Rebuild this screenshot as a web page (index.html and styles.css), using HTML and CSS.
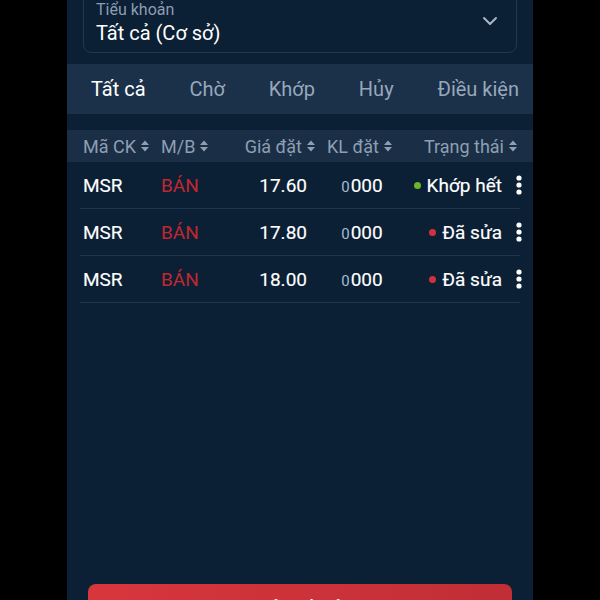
FILE: index.html
```html
<!DOCTYPE html>
<html lang="vi">
<head>
    <meta charset="UTF-8">
    <meta name="viewport" content="width=device-width, initial-scale=1.0">
    <title>Sổ lệnh</title>
    <link rel="stylesheet" href="styles.css">
</head>
<body>

<main class="panel">
    <!-- Chọn tiểu khoản -->
    <div class="account-select">
        <div class="account-text">
            <span class="account-label">Tiểu khoản</span>
            <span class="account-value">Tất cả (Cơ sở)</span>
        </div>
        <svg class="chevron" width="16" height="10" viewBox="0 0 16 10">
            <path d="M2 2 L8 8 L14 2" fill="none" stroke="currentColor" stroke-width="2" stroke-linecap="round" stroke-linejoin="round"/>
        </svg>
    </div>

    <!-- Tabs -->
    <nav class="tabs">
        <span class="tab active">Tất cả</span>
        <span class="tab">Chờ</span>
        <span class="tab">Khớp</span>
        <span class="tab">Hủy</span>
        <span class="tab">Điều kiện</span>
    </nav>

    <!-- Bảng lệnh -->
    <div class="table-head">
        <div class="th th-code">Mã CK <svg class="sort" width="10" height="14" viewBox="0 0 10 14"><path d="M1 6 L5 1.5 L9 6 Z M1 8 L5 12.5 L9 8 Z" fill="currentColor"/></svg></div>
        <div class="th th-side">M/B <svg class="sort" width="10" height="14" viewBox="0 0 10 14"><path d="M1 6 L5 1.5 L9 6 Z M1 8 L5 12.5 L9 8 Z" fill="currentColor"/></svg></div>
        <div class="th th-price">Giá đặt <svg class="sort" width="10" height="14" viewBox="0 0 10 14"><path d="M1 6 L5 1.5 L9 6 Z M1 8 L5 12.5 L9 8 Z" fill="currentColor"/></svg></div>
        <div class="th th-qty">KL đặt <svg class="sort" width="10" height="14" viewBox="0 0 10 14"><path d="M1 6 L5 1.5 L9 6 Z M1 8 L5 12.5 L9 8 Z" fill="currentColor"/></svg></div>
        <div class="th th-status">Trạng thái <svg class="sort" width="10" height="14" viewBox="0 0 10 14"><path d="M1 6 L5 1.5 L9 6 Z M1 8 L5 12.5 L9 8 Z" fill="currentColor"/></svg></div>
    </div>

    <div class="table-body">
        <div class="row">
            <div class="td td-code">MSR</div>
            <div class="td td-side">BÁN</div>
            <div class="td td-price">17.60</div>
            <div class="td td-qty"><span class="masked">0</span>000</div>
            <div class="td td-status">
                <span class="dot green"></span>Khớp hết
                <svg class="more" width="6" height="20" viewBox="0 0 6 20"><circle cx="3" cy="3" r="2.6" fill="currentColor"/><circle cx="3" cy="10" r="2.6" fill="currentColor"/><circle cx="3" cy="17" r="2.6" fill="currentColor"/></svg>
            </div>
        </div>
        <div class="row">
            <div class="td td-code">MSR</div>
            <div class="td td-side">BÁN</div>
            <div class="td td-price">17.80</div>
            <div class="td td-qty"><span class="masked">0</span>000</div>
            <div class="td td-status">
                <span class="dot red"></span>Đã sửa
                <svg class="more" width="6" height="20" viewBox="0 0 6 20"><circle cx="3" cy="3" r="2.6" fill="currentColor"/><circle cx="3" cy="10" r="2.6" fill="currentColor"/><circle cx="3" cy="17" r="2.6" fill="currentColor"/></svg>
            </div>
        </div>
        <div class="row">
            <div class="td td-code">MSR</div>
            <div class="td td-side">BÁN</div>
            <div class="td td-price">18.00</div>
            <div class="td td-qty"><span class="masked">0</span>000</div>
            <div class="td td-status">
                <span class="dot red"></span>Đã sửa
                <svg class="more" width="6" height="20" viewBox="0 0 6 20"><circle cx="3" cy="3" r="2.6" fill="currentColor"/><circle cx="3" cy="10" r="2.6" fill="currentColor"/><circle cx="3" cy="17" r="2.6" fill="currentColor"/></svg>
            </div>
        </div>
    </div>

    <button class="cancel-all" type="button">Hủy tất cả</button>
</main>

</body>
</html>
```

FILE: styles.css
```css
/* Nền chung */
body {
    margin: 0;
    padding: 0;
    background-color: #000;
    font-family: Roboto, "Noto Sans", sans-serif;
    color: #fff;
    height: 600px;
    overflow: hidden;
}

/* Khung ứng dụng */
.panel {
    width: 466px;
    height: 600px;
    margin: 0 auto;
    background-color: #0b1f35;
    overflow: hidden;
}

/* Ô chọn tiểu khoản */
.account-select {
    margin: -10px 16px 0;
    height: 63px;
    box-sizing: border-box;
    border: 1px solid #223750;
    border-radius: 8px;
    padding: 10px 18px 0 12px;
    display: flex;
    align-items: center;
    justify-content: space-between;
}

.account-text {
    display: flex;
    flex-direction: column;
    align-self: flex-start;
}

.account-label {
    font-size: 16px;
    line-height: 18px;
    color: #8d9db0;
}

.account-value {
    font-size: 20px;
    line-height: 24px;
    margin-top: 2px;
}

.chevron {
    color: #a9b7c7;
    margin-top: -12px;
}

/* Thanh tab */
.tabs {
    margin-top: 11px;
    height: 50px;
    background-color: #1b3049;
    display: flex;
    align-items: center;
    justify-content: space-between;
    padding: 0 14px 0 24px;
    font-size: 20px;
}

.tab {
    color: #97a8bb;
}

.tab.active {
    color: #fff;
}

/* Tiêu đề bảng */
.table-head {
    margin-top: 16px;
    height: 32px;
    background-color: #1a2e46;
    padding: 0 13px;
    display: grid;
    grid-template-columns: 78px 78px 84px 80px 120px;
    align-items: center;
    font-size: 18px;
    color: #8e9fb2;
}

.th {
    display: flex;
    align-items: center;
    gap: 4px;
    white-space: nowrap;
}

.sort {
    color: #8e9fb2;
}

.th-code,
.th-side {
    padding-left: 3px;
}

.th-price {
    justify-content: flex-end;
    padding-right: 4px;
}

.th-qty {
    justify-content: center;
}

.th-status {
    justify-content: flex-end;
    padding-right: 2px;
}

/* Dòng lệnh */
.table-body {
    margin: 0 13px;
}

.row {
    height: 47px;
    box-sizing: border-box;
    border-bottom: 1px solid #1e344d;
    display: grid;
    grid-template-columns: 78px 78px 84px 80px 120px;
    align-items: center;
    font-size: 19px;
    -webkit-text-stroke: 0.15px #fff;
}

.td-code,
.td-side {
    padding-left: 3px;
}

.td-side {
    color: #c1272f;
    -webkit-text-stroke: 0;
}

.td-price {
    text-align: right;
    padding-right: 13px;
}

.td-qty {
    text-align: center;
    padding-left: 4px;
}

.masked {
    font-size: 15px;
    color: #a8bccf;
    letter-spacing: 1px;
    -webkit-text-stroke: 0;
}

.td-status {
    display: flex;
    align-items: center;
    justify-content: flex-end;
    white-space: nowrap;
    margin-right: -2px;
}

.dot {
    width: 7px;
    height: 7px;
    border-radius: 50%;
    margin-right: 6px;
}

.dot.green {
    background-color: #6cb42b;
}

.dot.red {
    background-color: #d0323b;
}

.more {
    color: #fff;
    margin-left: 14px;
}

/* Nút hủy */
.cancel-all {
    display: block;
    width: 424px;
    margin: 281px auto 0;
    height: 46px;
    border: none;
    border-radius: 8px;
    background: linear-gradient(to right, #d8363d, #c12e35);
    color: #fff;
    font-family: Roboto, "Noto Sans", sans-serif;
    font-size: 19px;
    font-weight: 500;
    padding: 0;
}
```
